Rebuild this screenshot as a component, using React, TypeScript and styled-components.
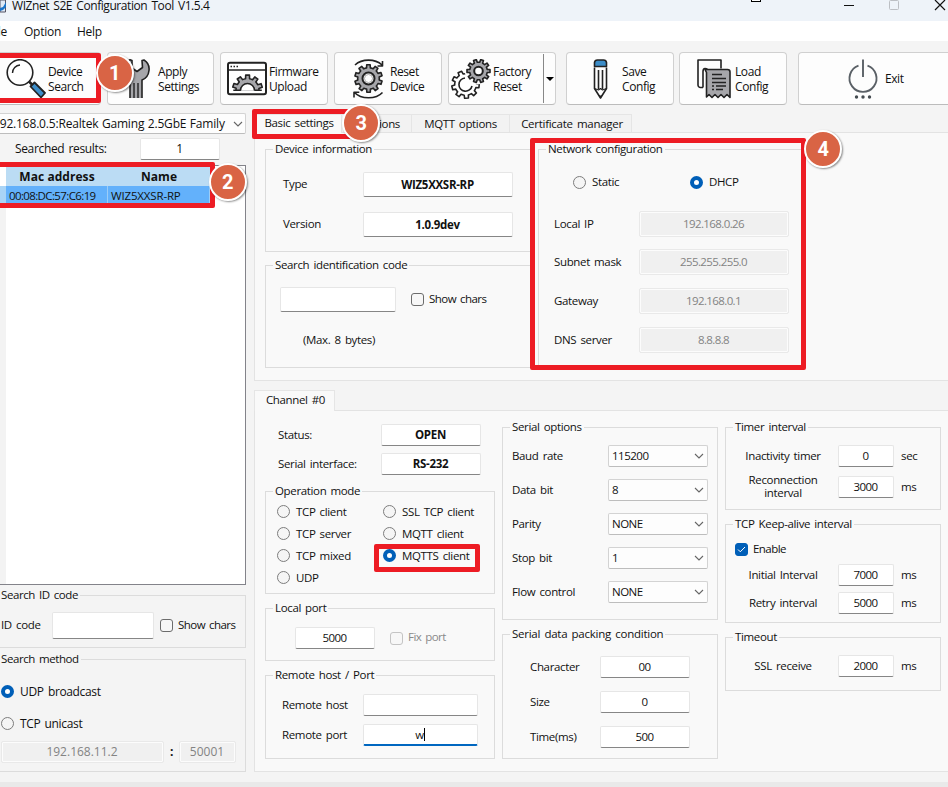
import React from 'react';
import styled, { createGlobalStyle, css } from 'styled-components';

const GlobalStyle = createGlobalStyle`
  *, *::before, *::after { box-sizing: border-box; }
  body { margin: 0; overflow: hidden; }
`;

/* ---------- window chrome ---------- */

const Window = styled.div`
  position: relative;
  width: 948px;
  height: 787px;
  overflow: hidden;
  display: flex;
  flex-direction: column;
  background: #f4f4f4;
  color: #111;
  font: 11.5px/16px 'Open Sans', 'Noto Sans', sans-serif;
  letter-spacing: -0.35px;
  word-spacing: 1.5px;
  white-space: nowrap;
`;

const TitleBar = styled.header`
  display: flex;
  height: 21px;
  flex: none;
  background: #eef3f9;
`;

const Title = styled.span`
  flex: 1;
  margin-left: 5px;
  margin-top: -3px;
  font-size: 12px;
  line-height: 18px;
  letter-spacing: -0.43px;
`;

const Menu = styled.nav`
  display: flex;
  align-items: center;
  height: 20px;
  flex: none;
  padding-top: 2px;
  background: #fff;
  font-size: 12px;
  letter-spacing: -0.25px;
`;

const MenuItem = styled.span<{ $w: number }>`
  width: ${(p) => p.$w}px;
  flex: none;
`;

const FirstMenuItem = styled(MenuItem)`
  margin-left: -11px;
`;

/* ---------- toolbar ---------- */

const Toolbar = styled.div`
  display: flex;
  align-items: flex-start;
  height: 64px;
  flex: none;
  padding-top: 11px;
`;

const ToolButton = styled.button<{ $w?: number; $ml?: number; $pl: number }>`
  display: flex;
  align-items: center;
  flex: none;
  width: ${(p) => p.$w ?? 108}px;
  height: 53px;
  margin: 0 0 0 ${(p) => p.$ml ?? 6}px;
  padding: 0 0 0 ${(p) => p.$pl}px;
  border: 1px solid #d0d0d0;
  border-bottom-color: #bcbcbc;
  border-radius: 4px;
  background: #fdfdfd;
  color: #111;
  font: 12px/15px 'Open Sans', 'Noto Sans', sans-serif;
  letter-spacing: -0.42px;
  text-align: left;
  svg { flex: none; }
`;

const ToolText = styled.span`
  margin-left: 2px;
  white-space: pre;
`;

const ToolDivider = styled.i`
  width: 1px;
  height: 55px;
  margin: -1px 0 0 4px;
  background: #9a9a9a;
`;

const DropArrow = styled.span`
  display: flex;
  align-items: center;
  justify-content: center;
  height: 49px;
  width: 12px;
  margin-left: auto;
  border-left: 1px solid #888;
  &::after {
    content: '';
    border: 4px solid transparent;
    border-top-color: #000;
    border-bottom: 0;
  }
`;

/* ---------- layout ---------- */

const Body = styled.main`
  display: flex;
  height: 677px;
  flex: none;
`;

const Sidebar = styled.aside`
  display: flex;
  flex-direction: column;
  width: 246px;
  padding-top: 8px;
`;

const Content = styled.section`
  display: flex;
  flex-direction: column;
  width: 694px;
  margin-left: 8px;
  padding-top: 9px;
`;

const StatusBar = styled.footer`
  height: 5px;
  background: #e9e9e9;
`;

const TabBar = styled.div<{ $mt?: number; $h: number }>`
  display: flex;
  height: ${(p) => p.$h}px;
  margin-top: ${(p) => p.$mt ?? 0}px;
  flex: none;
`;

const Tab = styled.div<{ $w: number; $active?: boolean }>`
  display: flex;
  align-items: center;
  justify-content: center;
  width: ${(p) => p.$w}px;
  border: 1px solid #e5e5e5;
  border-bottom: 0;
  background: ${(p) => (p.$active ? '#f9f9f9' : '#f2f2f2')};
  ${(p) => p.$active && css`
    margin-bottom: -1px;
    padding: 0 0 3px 2px;
    z-index: 1;
  `}
  & + & { border-left: 0; }
`;

const SecondTab = styled(Tab)`
  justify-content: flex-end;
  padding-right: 11px;
`;

const WideTab = styled(Tab)`
  padding-left: 3px;
  border-left: 0;
  letter-spacing: -0.28px;
`;

const Pane = styled.div<{ $h: number; $pt: number; $gap: number }>`
  display: flex;
  gap: ${(p) => p.$gap}px;
  height: ${(p) => p.$h}px;
  flex: none;
  padding: ${(p) => p.$pt}px 0 0 10px;
  border: 1px solid #e3e3e3;
  border-right: 0;
  background: #f9f9f9;
`;

const Column = styled.div<{ $w: number }>`
  width: ${(p) => p.$w}px;
  flex: none;
`;

const Group = styled.section<{ $h: number; $mt?: number; $ml?: number }>`
  height: ${(p) => p.$h}px;
  margin-top: ${(p) => p.$mt ?? 0}px;
  margin-left: ${(p) => p.$ml ?? 0}px;
  border: 1px solid #dcdcdc;
`;

const Legend = styled.h2<{ $side?: boolean; $ls?: number }>`
  width: fit-content;
  height: 16px;
  margin: -9px 0 0 7px;
  padding: 0 2px;
  background: ${(p) => (p.$side ? '#f4f4f4' : '#f9f9f9')};
  font: inherit;
  letter-spacing: ${(p) => p.$ls ?? (p.$side ? -0.42 : -0.35)}px;
`;

const Row = styled.div<{ $mt: number; $h?: number; $pl: number; $size?: number }>`
  display: flex;
  align-items: center;
  height: ${(p) => p.$h ?? 22}px;
  margin-top: ${(p) => p.$mt}px;
  padding-left: ${(p) => p.$pl}px;
  font-size: ${(p) => p.$size ?? 11.5}px;
`;

const Label = styled.span<{ $w?: number; $center?: boolean }>`
  width: ${(p) => (p.$w ? `${p.$w}px` : 'auto')};
  flex: none;
  padding-bottom: 2px;
  line-height: 13px;
  white-space: pre;
  text-align: ${(p) => (p.$center ? 'center' : 'left')};
`;

const Unit = styled.span`
  margin-left: 7px;
`;

/* ---------- controls ---------- */

const Field = styled.div<{ $w: number; $bold?: boolean; $disabled?: boolean; $focus?: boolean; $ls?: number }>`
  display: flex;
  align-items: center;
  justify-content: center;
  align-self: stretch;
  flex: none;
  width: ${(p) => p.$w}px;
  padding-right: 1px;
  border: 1px solid #e6e6e6;
  border-bottom-color: #868686;
  border-radius: 2px;
  background: #fff;
  font-weight: ${(p) => (p.$bold ? 700 : 400)};
  letter-spacing: ${(p) => p.$ls ?? (p.$bold ? -0.3 : -0.6)}px;
  ${(p) => p.$disabled && css`
    border-color: #e9e9e9;
    box-shadow: inset 0 0 0 1px #fcfcfc;
    background: #f0f0f0;
    color: #838383;
  `}
  ${(p) => p.$focus && css`
    border-bottom: 2px solid #0067c0;
  `}
`;

const Caret = styled.i`
  width: 1px;
  height: 13px;
  background: #000;
`;

const ComboBox = styled.div<{ $w: number; $ml?: number }>`
  display: flex;
  align-items: center;
  justify-content: space-between;
  align-self: stretch;
  flex: none;
  width: ${(p) => p.$w}px;
  margin-left: ${(p) => p.$ml ?? 0}px;
  padding: 0 3px;
  border: 1px solid #d3d3d3;
  border-bottom-color: #bdbdbd;
  border-radius: 2px;
  background: #fdfdfd;
  letter-spacing: -0.5px;
`;

const AdapterCombo = styled(ComboBox)`
  height: 21px;
  align-self: flex-start;
  font-size: 12px;
  letter-spacing: -0.17px;
  word-spacing: 0.5px;
  padding: 0 2px 0 1px;
`;

const RadioDot = styled.i<{ $on?: boolean }>`
  width: 13px;
  height: 13px;
  flex: none;
  margin-right: 6px;
  border-radius: 50%;
  border: ${(p) => (p.$on ? '4px solid #005fb8' : '1px solid #7d7d7d')};
  background: ${(p) => (p.$on ? '#fff' : '#f5f5f5')};
`;

const CheckSquare = styled.i<{ $on?: boolean; $dim?: boolean }>`
  display: flex;
  align-items: center;
  justify-content: center;
  width: 13px;
  height: 13px;
  flex: none;
  margin-right: 5px;
  border-radius: 3px;
  border: 1px solid ${(p) => (p.$on ? '#005fb8' : p.$dim ? '#c4c4c4' : '#6c6c6c')};
  background: ${(p) => (p.$on ? '#005fb8' : '#f7f7f7')};
`;

const CheckText = styled.span`
  padding-bottom: 2px;
  letter-spacing: -0.55px;
`;

const Option = styled.span<{ $w?: number; $ml?: number; $dim?: boolean }>`
  display: flex;
  align-items: center;
  width: ${(p) => (p.$w ? `${p.$w}px` : 'auto')};
  margin-left: ${(p) => p.$ml ?? 0}px;
  color: ${(p) => (p.$dim ? '#8a8a8a' : 'inherit')};
`;

const Colon = styled.b`
  width: 15px;
  text-align: center;
`;

/* ---------- device table ---------- */

const DeviceTable = styled.div`
  display: grid;
  grid-template-columns: 6px 102px 102px 1fr;
  grid-template-rows: 20px 19px 1fr;
  height: 420px;
  margin-top: 5px;
  border: 1px solid #83838a;
  border-left: 0;
  background: #fff;
`;

const HeadCell = styled.div`
  display: flex;
  align-items: center;
  justify-content: center;
  padding-top: 2px;
  background: #bbdcf4;
  font-size: 12px;
  font-weight: 700;
  letter-spacing: 0.05px;
  word-spacing: 0;
`;

const Cell = styled.div<{ $ls: number }>`
  display: flex;
  align-items: center;
  padding-left: 3px;
  border-right: 1px solid #9ccdf7;
  background: #63b1fb;
  letter-spacing: ${(p) => p.$ls}px;
`;

const Filler = styled.div<{ $bg: string }>`
  background: ${(p) => p.$bg};
`;

/* ---------- annotations ---------- */

const Highlight = styled.div<{ $x: number; $y: number; $w: number; $h: number }>`
  position: absolute;
  left: ${(p) => p.$x}px;
  top: ${(p) => p.$y}px;
  width: ${(p) => p.$w}px;
  height: ${(p) => p.$h}px;
  border: 5px solid #ed1c24;
  border-radius: 2px;
  z-index: 2;
`;

const Badge = styled.div<{ $x: number; $y: number }>`
  position: absolute;
  left: ${(p) => p.$x - 19}px;
  top: ${(p) => p.$y - 19}px;
  width: 38px;
  height: 38px;
  display: flex;
  align-items: center;
  justify-content: center;
  border: 2.5px solid #fff;
  border-radius: 50%;
  background: #d96445;
  color: #fff;
  font: 700 20px/20px Roboto, 'Liberation Sans', sans-serif;
  box-shadow: 1px 1px 2px rgba(0, 0, 0, 0.45);
  z-index: 3;
`;

const CursorScrap = styled.i`
  position: absolute;
  left: 751px;
  top: -6px;
  width: 10px;
  height: 8px;
  border: 1px solid #000;
  background: #fff;
`;

/* ---------- icons ---------- */

const gear = (cx: number, cy: number, inner: number, outer: number, teeth: number, turn = 0) => {
  const step = (Math.PI * 2) / teeth;
  const at = (r: number, a: number) => `${(cx + r * Math.cos(a)).toFixed(2)} ${(cy + r * Math.sin(a)).toFixed(2)}`;
  let d = '';
  for (let i = 0; i < teeth; i++) {
    const a = i * step + turn;
    d += `${i ? 'L' : 'M'}${at(inner, a - step * 0.28)}L${at(outer, a - step * 0.2)}L${at(outer, a + step * 0.2)}L${at(inner, a + step * 0.28)}`;
    d += `A${inner} ${inner} 0 0 1 ${at(inner, a + step * 0.72)}`;
  }
  return d + 'Z';
};

const Icon = ({ children }: { children: React.ReactNode }) => (
  <svg width="40" height="40" viewBox="0 0 40 40" fill="none" stroke="#222" strokeWidth="1.6" strokeLinejoin="round">
    {children}
  </svg>
);

const SearchIcon = () => (
  <Icon>
    <circle cx="14" cy="13.500" r="12.800" fill="#fff" />
    <path d="M6.500 14a8 8 0 0 1 7.500-8" strokeWidth="1.400" />
    <path d="M23 22.500l3 3" strokeWidth="2.500" />
    <path d="M24.500 27.500l4-4 10.500 10.500-4 4.500z" fill="#3c8dc8" strokeWidth="1.800" />
  </Icon>
);

const WrenchIcon = () => (
  <Icon>
    <path d="M14 39V21C9 19 6.500 15 7 10.500 7.500 6 10 2.500 14 .8l2 .7v7.500l5 3.500 5.500-4-.5-7 2-.5c4 2.500 5.500 6.500 5 10.500-.5 4.500-3 8-7 9.500V39" fill="#a6a6aa" />
    <path d="M18 39V24M22 39V24" strokeWidth="1.400" />
  </Icon>
);

const FirmwareIcon = () => (
  <Icon>
    <rect x="1" y="3.800" width="38" height="31.500" rx="2" strokeWidth="2" fill="#fff" />
    <path d="M1 11h38" strokeWidth="1.500" />
    <path d="M3.500 7.400h1.500M6.500 7.400h1.500M9.500 7.400h1.500" strokeWidth="1.500" />
    <clipPath id="halfGear"><rect x="0" y="13" width="40" height="19" /></clipPath>
    <path d={gear(20.5, 31, 11.5, 15, 10, 0.32)} fill="#a6a6aa" clipPath="url(#halfGear)" />
    <path d="M13.500 31.500a7 7 0 0 1 14 0" fill="#fff" />
    <path d="M6.300 31.300h7.500M27.500 31.300h7.300" />
  </Icon>
);

const ResetIcon = () => (
  <Icon>
    <path d={gear(20.5, 19.5, 10.8, 13.8, 10, 0.31)} fill="#a6a6aa" />
    <circle cx="20.500" cy="19.500" r="6" fill="#fff" strokeWidth="2" />
    <circle cx="20.500" cy="19.500" r="4" strokeWidth=".8" stroke="#999" />
    <path d="M7 6C14-.5 27-.5 34 6M34.500 2v5h-5" />
    <path d="M34.500 33.500C28 40.500 13 40.500 6.500 33.500M6 38.500v-5.300h5.300" />
  </Icon>
);

const FactoryIcon = () => (
  <Icon>
    <path d={gear(14.5, 25.5, 10.8, 13.8, 9, 0.1)} fill="#fff" />
    <path d="M14 19a6.600 6.600 0 1 0 7 8" />
    <circle cx="27.500" cy="11.500" r="13.800" fill="#fdfdfd" stroke="none" />
    <path d={gear(27.5, 12, 8.8, 11.6, 10, 0)} fill="#a6a6aa" />
    <circle cx="27.500" cy="12" r="4.300" fill="#fff" strokeWidth="2" />
  </Icon>
);

const PencilIcon = () => (
  <Icon>
    <path d="M14.500 8.500V29.500l6 9.500 6-9.500V8.500" fill="#fff" />
    <path d="M14.500 7.500V3.500a3 3 0 0 1 3-2.500h6a3 3 0 0 1 3 2.500v4z" fill="#3c8dc8" />
    <path d="M18.500 11v19M22.500 11v19" />
    <path d="M14.500 29.500l4 1.500 2-1.500 2 1.500 4-1.500" strokeWidth="1.200" />
    <path d="M18.500 36.500h4l-2 3z" fill="#222" stroke="none" />
  </Icon>
);

const LoadIcon = () => (
  <Icon>
    <path d="M10 28.500H7.500A2.500 2.500 0 0 1 5 26V1h23v8.500" />
    <path d="M15 12.500c0-2-1.500-3-3-3s-2 1-2 3v16" fill="#fff" />
    <path d="M12 10.500h22.500a2.500 2.500 0 0 1 2.500 2.500v25.500l-3-3-3 3-3-3-3 3-3-3-3 3-3-3-2.500 2.500V13.500z" fill="#a6a6aa" />
    <path d="M19 15.500h10M19 19.500h14M19 23.500h14M19 27h2M23 27h10M19 30.500h2M23 30.500h7" strokeWidth="1.500" />
  </Icon>
);

const PowerIcon = () => (
  <Icon>
    <g stroke="#5a6066" strokeWidth="1.900">
      <path d="M15.500 6.600a13.500 13.500 0 1 0 9 0" />
      <path d="M20 .5V18" />
    </g>
    <g fill="#444b50" stroke="none">
      <circle cx="13.500" cy="38" r="1.700" /><circle cx="20" cy="38" r="1.700" /><circle cx="26.500" cy="38" r="1.700" />
    </g>
  </Icon>
);

const Chevron = () => (
  <svg width="10" height="6" viewBox="0 0 10 6" fill="none" stroke="#666" strokeWidth="1.100">
    <path d="M1 1l4 4 4-4" />
  </svg>
);

const AppIcon = () => (
  <svg width="7" height="14" viewBox="0 0 7 14">
    <path d="M0 0h5.500v12H0z" fill="#dfe9f5" stroke="#556" />
    <path d="M0 8l3-1 3-5v5l-3 3-3 1z" fill="#1b74c9" />
  </svg>
);

const WindowControls = () => (
  <svg width="110" height="14" viewBox="0 0 110 14" fill="none" strokeWidth="1">
    <path d="M6 5.500h10" stroke="#111" />
    <rect x="51.500" y=".5" width="9" height="9" rx="1" stroke="#bcbfc4" />
    <path d="M97 0l10 10M107 0l-10 10" stroke="#111" strokeWidth="1.200" />
  </svg>
);

/* ---------- composed parts ---------- */

const Radio = ({ label, on, w }: { label: string; on?: boolean; w?: number }) => (
  <Option $w={w}><RadioDot $on={on} />{label}</Option>
);

const Check = ({ label, on, dim, ml }: { label: string; on?: boolean; dim?: boolean; ml?: number }) => (
  <Option $ml={ml} $dim={dim}>
    <CheckSquare $on={on} $dim={dim}>
      {on && (
        <svg width="9" height="7" viewBox="0 0 9 7" fill="none" stroke="#fff"><path d="M1 3.500l2.300 2.300L8 1" /></svg>
      )}
    </CheckSquare>
    <CheckText>{label}</CheckText>
  </Option>
);

const serialOptions = [['Baud rate', '115200'], ['Data bit', '8'], ['Parity', 'NONE'], ['Stop bit', '1'], ['Flow control', 'NONE']];
const networkRows: [string, string, number][] = [
  ['Local IP', '192.168.0.26', 22], ['Subnet mask', '255.255.255.0', 12], ['Gateway', '192.168.0.1', 13], ['DNS server', '8.8.8.8', 13],
];
const packingRows = [['Character', '00'], ['Size', '0'], ['Time(ms)', '500']];

const TimerRow = ({ label, value, unit, mt }: { label: string; value: string; unit: string; mt: number }) => (
  <Row $mt={mt} $pl={2}>
    <Label $w={110} $center>{label}</Label>
    <Field $w={56}>{value}</Field>
    <Unit>{unit}</Unit>
  </Row>
);

export default function App() {
  return (
    <>
      <GlobalStyle />
      <Window>
        <TitleBar>
          <AppIcon />
          <Title>WIZnet S2E Configuration Tool V1.5.4</Title>
          <WindowControls />
        </TitleBar>
        <Menu>
          <FirstMenuItem $w={35}>File</FirstMenuItem>
          <MenuItem $w={53}>Option</MenuItem>
          <MenuItem $w={40}>Help</MenuItem>
        </Menu>

        <Toolbar>
          <ToolButton $w={106} $ml={-5} $pl={10}><SearchIcon /><ToolText>{'Device\nSearch'}</ToolText></ToolButton>
          <ToolButton $w={107} $pl={8}><WrenchIcon /><ToolText>{'Apply\nSettings'}</ToolText></ToolButton>
          <ToolButton $pl={6}><FirmwareIcon /><ToolText>{'Firmware\nUpload'}</ToolText></ToolButton>
          <ToolButton $pl={13}><ResetIcon /><ToolText>{'Reset\nDevice'}</ToolText></ToolButton>
          <ToolButton $pl={2}><FactoryIcon /><ToolText>{'Factory\nReset'}</ToolText><DropArrow /></ToolButton>
          <ToolDivider />
          <ToolButton $pl={13}><PencilIcon /><ToolText>{'Save\nConfig'}</ToolText></ToolButton>
          <ToolButton $ml={5} $pl={13}><LoadIcon /><ToolText>{'Load\nConfig'}</ToolText></ToolButton>
          <ToolDivider />
          <ToolButton $w={180} $ml={7} $pl={44}><PowerIcon /><ToolText>Exit</ToolText></ToolButton>
        </Toolbar>

        <Body>
          <Sidebar>
            <AdapterCombo $w={255} $ml={-9}><span>192.168.0.5:Realtek Gaming 2.5GbE Family</span><Chevron /></AdapterCombo>
            <Row $mt={4} $pl={15} $size={12}>
              <Label $w={125}>Searched results:</Label>
              <Field $w={80}>1</Field>
            </Row>
            <DeviceTable>
              <Filler $bg="#fff" /><HeadCell>Mac address</HeadCell><HeadCell>Name</HeadCell><Filler $bg="#fff" />
              <Filler $bg="#a9d4f6" /><Cell $ls={-0.62}>00:08:DC:57:C6:19</Cell><Cell $ls={-0.16}>WIZ5XXSR-RP</Cell><Filler $bg="#fff" />
              <Filler $bg="#f3f3f3" />
            </DeviceTable>
            <Group $h={53} $mt={10} $ml={-9}>
              <Legend $side>Search ID code</Legend>
              <Row $mt={9} $pl={9} $h={27}>
                <Label $w={51}>ID code</Label>
                <Field $w={102} />
                <Check label="Show chars" ml={6} />
              </Row>
            </Group>
            <Group $h={113} $mt={11} $ml={-9}>
              <Legend $side>Search method</Legend>
              <Row $mt={18} $pl={9} $h={13} $size={12}><Radio on label="UDP broadcast" /></Row>
              <Row $mt={19} $pl={9} $h={13} $size={12}><Radio label="TCP unicast" /></Row>
              <Row $mt={11} $pl={9} $size={12}>
                <Field $w={163} $disabled $ls={0}>192.168.11.2</Field>
                <Colon>:</Colon>
                <Field $w={57} $disabled $ls={0}>50001</Field>
              </Row>
            </Group>
          </Sidebar>

          <Content>
            <TabBar $h={18}>
              <Tab $w={88} $active>Basic settings</Tab>
              <SecondTab $w={70}>options</SecondTab>
              <Tab $w={98}>MQTT options</Tab>
              <WideTab $w={122}>Certificate manager</WideTab>
            </TabBar>
            <Pane $h={249} $pt={16} $gap={3}>
              <Column $w={270}>
                <Group $h={103}>
                  <Legend>Device information</Legend>
                  <Row $mt={15} $pl={17} $h={25}><Label $w={80}>Type</Label><Field $w={150} $bold>WIZ5XXSR-RP</Field></Row>
                  <Row $mt={15} $pl={17} $h={25}><Label $w={80}>Version</Label><Field $w={150} $bold>1.0.9dev</Field></Row>
                </Group>
                <Group $h={103} $mt={13}>
                  <Legend>Search identification code</Legend>
                  <Row $mt={14} $pl={14} $h={25}><Field $w={116} /><Check label="Show chars" ml={15} /></Row>
                  <Row $mt={20} $pl={37} $h={16}><Label $w={80}>(Max. 8 bytes)</Label></Row>
                </Group>
              </Column>
              <Column $w={266}>
                <Group $h={219}>
                  <Legend>Network configuration</Legend>
                  <Row $mt={18} $pl={34} $h={14}><Radio label="Static" w={117} /><Radio label="DHCP" on /></Row>
                  {networkRows.map(([label, value, mt]) => (
                    <Row key={label} $mt={mt} $pl={15} $h={26}>
                      <Label $w={85}>{label}</Label>
                      <Field $w={150} $disabled>{value}</Field>
                    </Row>
                  ))}
                </Group>
              </Column>
            </Pane>

            <TabBar $h={20} $mt={9}>
              <Tab $w={81} $active>Channel #0</Tab>
            </TabBar>
            <Pane $h={362} $pt={0} $gap={7}>
              <Column $w={230}>
                <Row $mt={13} $pl={13}><Label $w={103}>Status:</Label><Field $w={100} $bold>OPEN</Field></Row>
                <Row $mt={7} $pl={13}><Label $w={103}>Serial interface:</Label><Field $w={100} $bold>RS-232</Field></Row>
                <Group $h={103} $mt={16}>
                  <Legend>Operation mode</Legend>
                  <Row $mt={6} $pl={11} $h={13}><Radio label="TCP client" w={106} /><Radio label="SSL TCP client" /></Row>
                  <Row $mt={9} $pl={11} $h={13}><Radio label="TCP server" w={106} /><Radio label="MQTT client" /></Row>
                  <Row $mt={9} $pl={11} $h={13}><Radio label="TCP mixed" w={106} /><Radio label="MQTTS client" on /></Row>
                  <Row $mt={9} $pl={11} $h={13}><Radio label="UDP" /></Row>
                </Group>
                <Group $h={53} $mt={14}>
                  <Legend>Local port</Legend>
                  <Row $mt={11} $pl={29}><Field $w={80}>5000</Field><Check label="Fix port" dim ml={15} /></Row>
                </Group>
                <Group $h={84} $mt={14}>
                  <Legend>Remote host / Port</Legend>
                  <Row $mt={11} $pl={16}><Label $w={81}>Remote host</Label><Field $w={115} /></Row>
                  <Row $mt={8} $pl={16}><Label $w={81}>Remote port</Label><Field $w={115} $focus>w<Caret /></Field></Row>
                </Group>
              </Column>
              <Column $w={216}>
                <Group $h={193} $mt={16}>
                  <Legend>Serial options</Legend>
                  {serialOptions.map(([label, value], i) => (
                    <Row key={label} $mt={i ? 12 : 10} $pl={9}>
                      <Label $w={96}>{label}</Label>
                      <ComboBox $w={100}>{value}<Chevron /></ComboBox>
                    </Row>
                  ))}
                </Group>
                <Group $h={125} $mt={14}>
                  <Legend $ls={-0.25}>Serial data packing condition</Legend>
                  {packingRows.map(([label, value], i) => (
                    <Row key={label} $mt={i ? 13 : 14} $pl={27}>
                      <Label $w={70}>{label}</Label>
                      <Field $w={90}>{value}</Field>
                    </Row>
                  ))}
                </Group>
              </Column>
              <Column $w={216}>
                <Group $h={83} $mt={16}>
                  <Legend>Timer interval</Legend>
                  <TimerRow mt={10} label="Inactivity timer" value="0" unit="sec" />
                  <TimerRow mt={9} label={'Reconnection\ninterval'} value="3000" unit="ms" />
                </Group>
                <Group $h={99} $mt={14}>
                  <Legend>TCP Keep-alive interval</Legend>
                  <Row $mt={11} $pl={9} $h={13}><Check label="Enable" on /></Row>
                  <TimerRow mt={8} label="Initial Interval" value="7000" unit="ms" />
                  <TimerRow mt={6} label="Retry interval" value="5000" unit="ms" />
                </Group>
                <Group $h={54} $mt={14}>
                  <Legend>Timeout</Legend>
                  <TimerRow mt={10} label="SSL receive" value="2000" unit="ms" />
                </Group>
              </Column>
            </Pane>
          </Content>
        </Body>
        <StatusBar />

        <CursorScrap />
        <Highlight $x={-8} $y={53} $w={109} $h={50} />
        <Highlight $x={-8} $y={162} $w={223} $h={46} />
        <Highlight $x={252} $y={109} $w={100} $h={30} />
        <Highlight $x={530} $y={138} $w={276} $h={232} />
        <Highlight $x={374} $y={544} $w={106} $h={28} />
        <Badge $x={114.5} $y={73}>1</Badge>
        <Badge $x={227.5} $y={182}>2</Badge>
        <Badge $x={361} $y={123}>3</Badge>
        <Badge $x={823} $y={149}>4</Badge>
      </Window>
    </>
  );
}
